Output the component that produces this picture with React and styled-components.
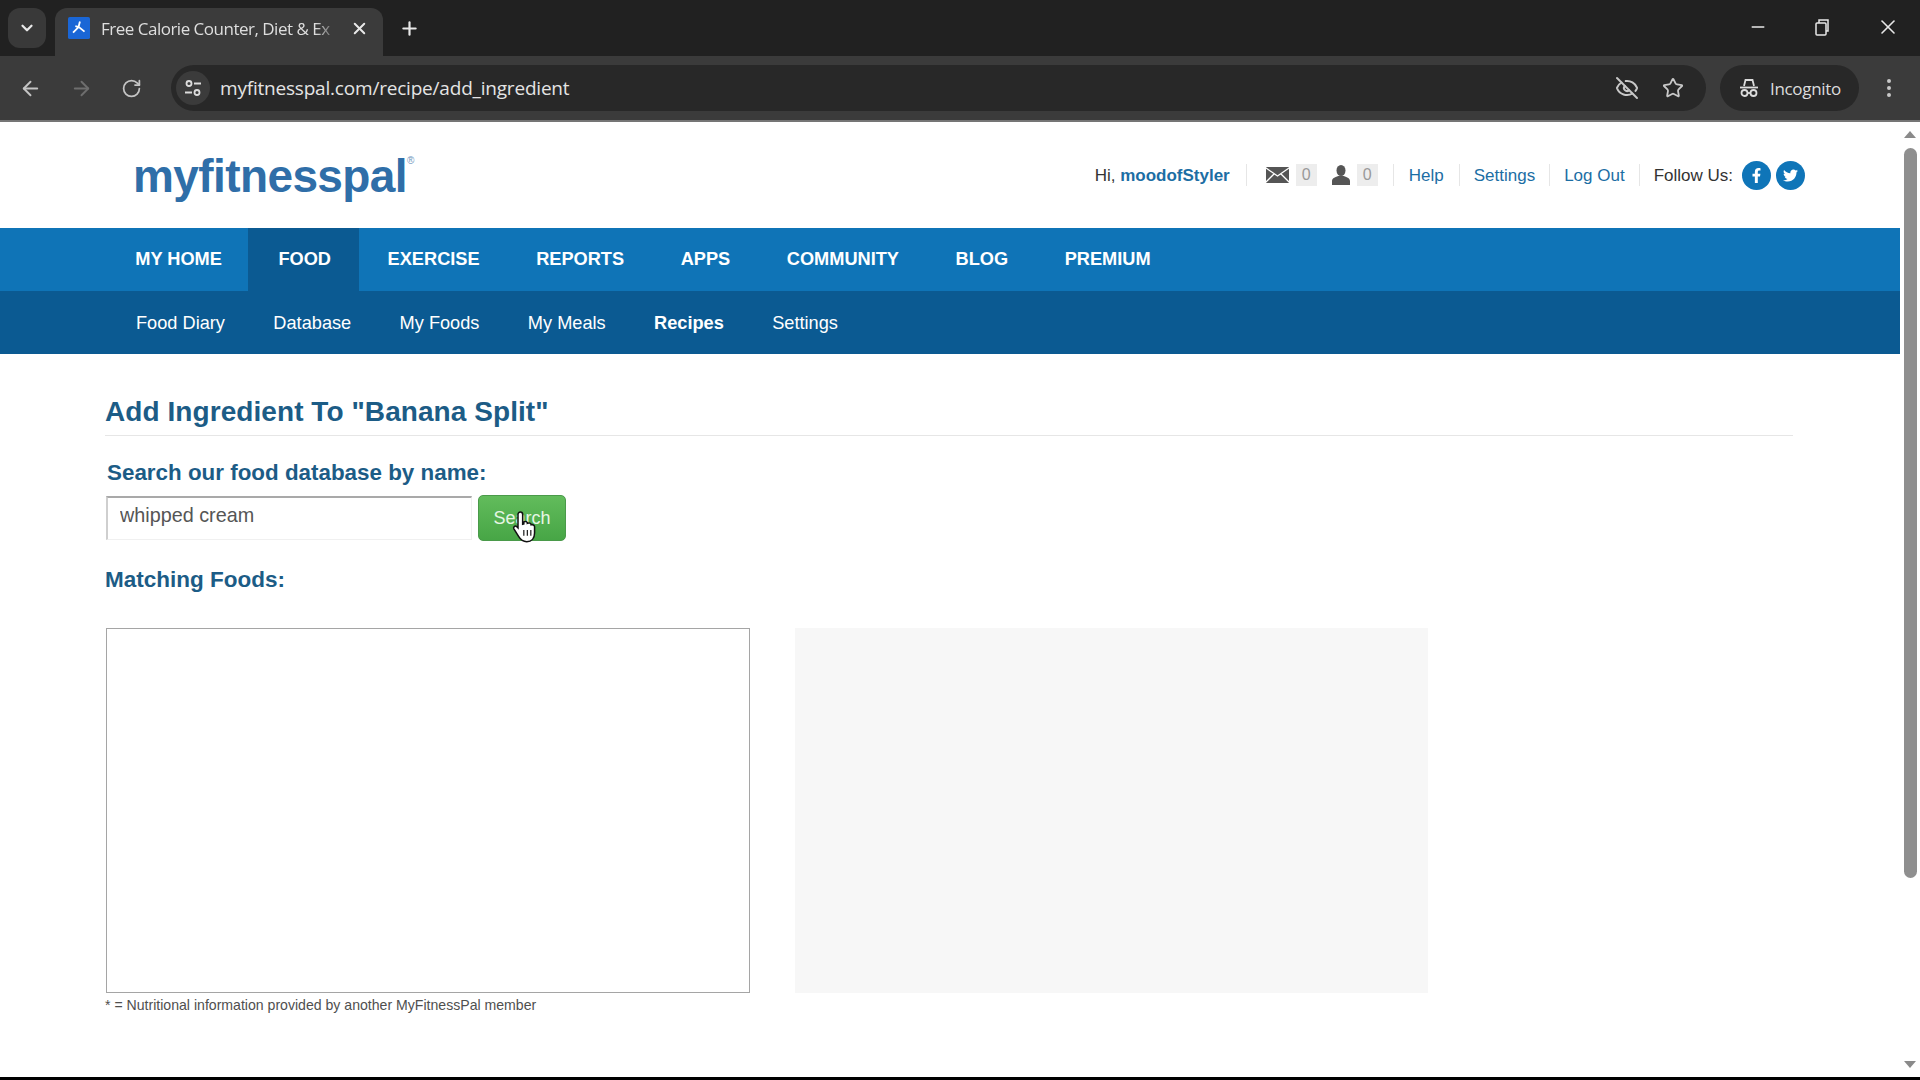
import styled, { createGlobalStyle } from "styled-components";
import {
  ArrowLeft,
  ArrowRight,
  ChevronDown,
  EllipsisVertical,
  EyeOff,
  Minus,
  Plus,
  RotateCw,
  Star,
  X,
} from "lucide-react";
import { FaFacebookF, FaTwitter } from "react-icons/fa";

const mainNav = ["MY HOME", "FOOD", "EXERCISE", "REPORTS", "APPS", "COMMUNITY", "BLOG", "PREMIUM"];
const subNav = ["Food Diary", "Database", "My Foods", "My Meals", "Recipes", "Settings"];

export default function App() {
  return (
    <>
      <GlobalStyle />
      <Screen>
        <TabStrip>
          <TabMenu>
            <ChevronDown size={18} strokeWidth={3} />
          </TabMenu>
          <Tab>
            <Favicon viewBox="0 0 24 24">
              <rect width="24" height="24" rx="2" fill="#1a66d6" />
              <path d="M13 5l-1.500 6-6 6M12 11l6 5M8 10l4 1" stroke="#fff" strokeWidth="2" fill="none" />
            </Favicon>
            <TabTitle>Free Calorie Counter, Diet &amp; Ex</TabTitle>
            <X size={19} strokeWidth={2.5} color="#e8e8e8" />
          </Tab>
          <NewTab>
            <Plus size={21} strokeWidth={2.5} />
          </NewTab>
          <WindowControls>
            <Minus size={20} strokeWidth={1.6} />
            <svg width="20" height="20" viewBox="0 0 20 20" fill="none" stroke="#e8e8e8" strokeWidth="1.5">
              <rect x="4" y="6" width="10" height="12" rx="1" />
              <path d="M7 6V3h9v11h-2" />
            </svg>
            <X size={24} strokeWidth={1.6} />
          </WindowControls>
        </TabStrip>

        <Toolbar>
          <NavIcons>
            <ArrowLeft size={23} color="#c4c4c4" />
            <ArrowRight size={23} color="#6e6e6e" />
            <RotateCw size={21} color="#c4c4c4" />
          </NavIcons>
          <AddressBar>
            <SiteButton>
              <svg width="20" height="20" viewBox="0 0 20 20" fill="none" stroke="#dcdcdc" strokeWidth="1.8">
                <circle cx="6" cy="5.500" r="2.500" />
                <path d="M11 5.500h7M2 14.500h7" />
                <circle cx="14" cy="14.500" r="2.500" />
              </svg>
            </SiteButton>
            <Url>myfitnesspal.com/recipe/add_ingredient</Url>
            <AddressIcons>
              <EyeOff size={24} color="#c8c8c8" />
              <Star size={22} color="#c8c8c8" />
            </AddressIcons>
          </AddressBar>
          <IncognitoPill>
            <svg width="22" height="22" viewBox="0 0 22 22" fill="none" stroke="#dcdcdc" strokeWidth="1.8">
              <path d="M6 9l1.500-6h7L16 9" />
              <path d="M2 10.500h18" />
              <circle cx="6.500" cy="16" r="3" />
              <circle cx="15.500" cy="16" r="3" />
              <path d="M9.500 16h3" />
            </svg>
            Incognito
          </IncognitoPill>
          <MenuDots>
            <EllipsisVertical size={24} color="#c8c8c8" />
          </MenuDots>
        </Toolbar>

        <Viewport>
          <Page>
            <SiteHeader>
              <Logo>
                myfitnesspal<sup>®</sup>
              </Logo>
              <UserBar>
                <GreetingItem>
                  Hi,&nbsp;<Username>moodofStyler</Username>
                </GreetingItem>
                <MessagesItem>
                  <svg width="23" height="16" viewBox="0 0 23 16">
                    <rect width="23" height="16" rx="1" fill="#555" />
                    <path d="M0 1l11.500 8L23 1M0 15l8-8M23 15l-8-8" stroke="#fff" strokeWidth="1.300" fill="none" />
                  </svg>
                  <Count>0</Count>
                  <FriendIcon width="18" height="20" viewBox="0 0 18 20">
                    <ellipse cx="9" cy="5.500" rx="4.500" ry="5.500" fill="#555" />
                    <path d="M0 20v-4c0-3 4-4 6-5h6c2 1 6 2 6 5v4z" fill="#555" />
                  </FriendIcon>
                  <Count>0</Count>
                </MessagesItem>
                <UserItem><UserLink>Help</UserLink></UserItem>
                <UserItem $tight><UserLink>Settings</UserLink></UserItem>
                <UserItem $tight><UserLink>Log Out</UserLink></UserItem>
                <FollowUs>
                  <FollowLabel>Follow Us:</FollowLabel>
                  <Social><FaFacebookF /></Social>
                  <Social><FaTwitter /></Social>
                </FollowUs>
              </UserBar>
            </SiteHeader>

            <MainNav>
              {mainNav.map((item) => (
                <MainNavItem key={item} $active={item === "FOOD"}>{item}</MainNavItem>
              ))}
            </MainNav>
            <SubNav>
              {subNav.map((item) => (
                <SubNavItem key={item} $active={item === "Recipes"}>{item}</SubNavItem>
              ))}
            </SubNav>

            <Content>
              <Heading>Add Ingredient To "Banana Split"</Heading>
              <SearchLabel>Search our food database by name:</SearchLabel>
              <SearchRow>
                <SearchInput readOnly value="whipped cream" />
                <SearchButton>
                  Search
                  <HandCursor viewBox="0 0 24 30">
                    <path
                      d="M8 2.500c1.300 0 2 1 2 2.200V13l1-.3V11c1.800-.8 3 0 3 1.300 1.700-.7 3-.2 3.200 1.200 1.800-.4 3 .4 3 2v5c0 4.500-2.500 7.500-6.700 7.500-3.500 0-5.200-1.500-7-4.500l-4-6.500c-.8-1.500.8-3 2.300-2l1.200 1.200V4.700C6 3.500 6.800 2.500 8 2.500z"
                      fill="#fff"
                      stroke="#111"
                      strokeWidth="1.300"
                    />
                    <path d="M11 18v5M14 18v5M17 18v5" stroke="#111" strokeWidth="1" />
                  </HandCursor>
                </SearchButton>
              </SearchRow>
              <MatchingTitle>Matching Foods:</MatchingTitle>
              <Panels>
                <ResultsColumn>
                  <ResultsBox />
                  <Footnote>* = Nutritional information provided by another MyFitnessPal member</Footnote>
                </ResultsColumn>
                <DetailBox />
              </Panels>
            </Content>
          </Page>

          <Scrollbar>
            <ScrollArrow $dir="up" />
            <ScrollThumb />
            <ScrollArrow $dir="down" />
          </Scrollbar>
        </Viewport>
        <BottomEdge />
      </Screen>
    </>
  );
}

const GlobalStyle = createGlobalStyle`
  html, body {
    margin: 0;
    padding: 0;
    background: #fff;
    overflow: hidden;
  }
  * {
    box-sizing: border-box;
  }
`;

const Screen = styled.div`
  width: 100vw;
  height: 100vh;
  display: flex;
  flex-direction: column;
  font-family: "Liberation Sans", Arial, sans-serif;
  overflow: hidden;
`;

const TabStrip = styled.div`
  height: 56px;
  flex: none;
  background: #212121;
  display: flex;
  align-items: flex-end;
  padding-left: 8px;
  color: #e8e8e8;
`;

const TabMenu = styled.div`
  width: 38px;
  height: 40px;
  margin-bottom: 8px;
  border-radius: 12px;
  background: #393939;
  display: flex;
  align-items: center;
  justify-content: center;
`;

const Tab = styled.div`
  width: 328px;
  height: 48px;
  margin-left: 9px;
  padding: 0 14px 8px 13px;
  border-radius: 12px 12px 0 0;
  background: #3b3b3b;
  display: flex;
  align-items: center;
  gap: 11px;
`;

const Favicon = styled.svg`
  width: 22px;
  height: 22px;
  flex: none;
`;

const TabTitle = styled.span`
  flex: 1;
  white-space: nowrap;
  font-size: 17px;
  color: #dedede;
  font-family: "Open Sans", sans-serif;
  letter-spacing: -0.5px;
  -webkit-mask-image: linear-gradient(to right, #000 90%, transparent);
  mask-image: linear-gradient(to right, #000 90%, transparent);
`;

const NewTab = styled.div`
  margin: 0 0 17px 16px;
  display: flex;
`;

const WindowControls = styled.div`
  margin: 0 20px 17px auto;
  display: flex;
  align-items: center;
  gap: 44px;
`;

const Toolbar = styled.div`
  height: 66px;
  flex: none;
  background: #3b3b3b;
  border-bottom: 2px solid #757575;
  display: flex;
  align-items: center;
  padding-left: 19px;
`;

const NavIcons = styled.div`
  width: 152px;
  display: flex;
  align-items: center;
  gap: 28px;
`;

const AddressBar = styled.div`
  width: 1535px;
  height: 46px;
  border-radius: 23px;
  background: #282828;
  display: flex;
  align-items: center;
  padding-left: 5px;
`;

const SiteButton = styled.div`
  width: 34px;
  height: 34px;
  border-radius: 50%;
  background: #3b3b3b;
  display: flex;
  align-items: center;
  justify-content: center;
`;

const Url = styled.span`
  margin-left: 10px;
  font-family: "Open Sans", sans-serif;
  font-size: 19px;
  letter-spacing: -0.2px;
  color: #e4e4e4;
`;

const AddressIcons = styled.div`
  margin-left: auto;
  padding-right: 22px;
  display: flex;
  align-items: center;
  gap: 23px;
`;

const IncognitoPill = styled.div`
  width: 139px;
  height: 46px;
  margin-left: 14px;
  border-radius: 23px;
  background: #282828;
  color: #dcdcdc;
  font-family: "Open Sans", sans-serif;
  font-size: 17px;
  letter-spacing: -0.3px;
  display: flex;
  align-items: center;
  justify-content: center;
  gap: 10px;
`;

const MenuDots = styled.div`
  margin-left: 18px;
  display: flex;
`;

const Viewport = styled.div`
  flex: 1;
  min-height: 0;
  display: flex;
`;

const Page = styled.div`
  flex: 1;
  min-width: 0;
  background: #fff;
`;

const SiteHeader = styled.header`
  height: 106px;
  padding: 0 95px 0 133px;
  display: flex;
  align-items: center;
  justify-content: space-between;
`;

const Logo = styled.div`
  font-size: 46px;
  font-weight: 700;
  letter-spacing: -0.6px;
  color: #2f6ea8;
  margin-top: 2px;
  sup {
    font-size: 10px;
    font-weight: 400;
    vertical-align: 28px;
    line-height: 0;
    color: #6f97bd;
  }
`;

const UserBar = styled.div`
  display: flex;
  align-items: center;
  font-size: 17px;
  color: #333;
`;

const UserItem = styled.div`
  height: 22px;
  padding: 2px ${(p) => (p.$tight ? 14 : 15)}px 0;
  border-right: 1px solid #e6e6e6;
  display: flex;
  align-items: center;
`;

const GreetingItem = styled(UserItem)`
  padding-right: 16px;
`;

const MessagesItem = styled(UserItem)`
  padding: 0 15px 0 19px;
`;

const FriendIcon = styled.svg`
  margin-left: 15px;
`;

const Username = styled.span`
  color: #1c6ea4;
  font-weight: 700;
`;

const UserLink = styled.span`
  color: #1c6ea4;
`;

const Count = styled.span`
  width: 21px;
  height: 22px;
  margin-left: 7px;
  background: #ededed;
  color: #999;
  font-size: 16px;
  display: flex;
  align-items: center;
  justify-content: center;
`;

const FollowUs = styled.div`
  padding-left: 14px;
  display: flex;
  align-items: center;
`;

const FollowLabel = styled.span`
  padding-top: 2px;
`;

const Social = styled.span`
  width: 29px;
  height: 29px;
  border-radius: 50%;
  margin-left: 5px;
  background: #0f75b8;
  color: #fff;
  font-size: 15px;
  display: flex;
  align-items: center;
  justify-content: center;
  &:nth-of-type(2) {
    margin-left: 9px;
  }
`;

const MainNav = styled.nav`
  height: 63px;
  background: #0f74b7;
  padding-left: 107px;
  display: flex;
`;

const MainNavItem = styled.div`
  padding: 0 28.300px;
  display: flex;
  align-items: center;
  font-size: 18.200px;
  font-weight: 700;
  color: #fff;
  ${(p) => p.$active && "background: #0b5a92; margin-left: -2.500px; padding-left: 30.800px;"}
`;

const SubNav = styled.nav`
  height: 63px;
  background: #0b5a92;
  padding: 1px 0 0 136px;
  display: flex;
  align-items: center;
  gap: 48.400px;
`;

const SubNavItem = styled.div`
  font-size: 18.200px;
  color: #fff;
  font-weight: ${(p) => (p.$active ? 700 : 400)};
`;

const Content = styled.main`
  padding: 0 107px 0 105px;
`;

const Heading = styled.h1`
  margin: 0;
  height: 82px;
  padding-top: 40px;
  border-bottom: 1px solid #e6e6e6;
  font-size: 28px;
  line-height: 36px;
  font-weight: 700;
  letter-spacing: 0.07px;
  color: #1c5c86;
`;

const SearchLabel = styled.div`
  margin: 24px 0 0 2px;
  font-size: 22.400px;
  line-height: 26px;
  font-weight: 700;
  color: #1c5c86;
`;

const SearchRow = styled.div`
  margin-top: 9px;
  display: flex;
  align-items: flex-start;
  gap: 6px;
`;

const SearchInput = styled.input`
  width: 366px;
  height: 44px;
  margin: 1px 0 0 1px;
  padding: 0 12px 7px 12px;
  border: 1px solid #f0f0f0;
  border-top: 2px solid #a9a9a9;
  border-left: 2px solid #cfcfcf;
  font-family: inherit;
  font-size: 19.800px;
  color: #555;
  outline: none;
`;

const SearchButton = styled.button`
  position: relative;
  width: 88px;
  height: 46px;
  border: 1px solid #4a9a4a;
  border-radius: 5px;
  background: linear-gradient(#62bc5c, #47a646);
  color: #e6f6e4;
  font-family: inherit;
  font-size: 18px;
  padding: 0;
`;

const HandCursor = styled.svg`
  position: absolute;
  left: 32px;
  top: 13px;
  width: 28px;
  height: 35px;
`;

const MatchingTitle = styled.div`
  margin-top: 26px;
  font-size: 22.500px;
  line-height: 26px;
  font-weight: 700;
  color: #1c5c86;
`;

const Panels = styled.div`
  margin-top: 35px;
  display: flex;
  gap: 45px;
  padding-left: 1px;
`;

const ResultsColumn = styled.div`
  width: 644px;
`;

const ResultsBox = styled.div`
  height: 365px;
  border: 1.500px solid #a5a5a5;
  background: #fff;
`;

const Footnote = styled.div`
  margin: 3px 0 0 -1px;
  font-size: 14.100px;
  line-height: 18px;
  color: #4f4f4f;
`;

const DetailBox = styled.div`
  width: 633px;
  height: 365px;
  background: #f7f7f7;
`;

const Scrollbar = styled.div`
  width: 20px;
  flex: none;
  padding-top: 9px;
  display: flex;
  flex-direction: column;
  align-items: center;
`;

const ScrollArrow = styled.div`
  width: 0;
  height: 0;
  border-left: 6px solid transparent;
  border-right: 6px solid transparent;
  ${(p) =>
    p.$dir === "up"
      ? "border-bottom: 7px solid #8a8a8a;"
      : "border-top: 7px solid #8a8a8a; margin-top: auto; margin-bottom: 9px;"}
`;

const ScrollThumb = styled.div`
  width: 13px;
  height: 730px;
  margin-top: 10px;
  border-radius: 7px;
  background: #8f8f8f;
`;

const BottomEdge = styled.div`
  height: 3px;
  flex: none;
  background: #000;
`;
